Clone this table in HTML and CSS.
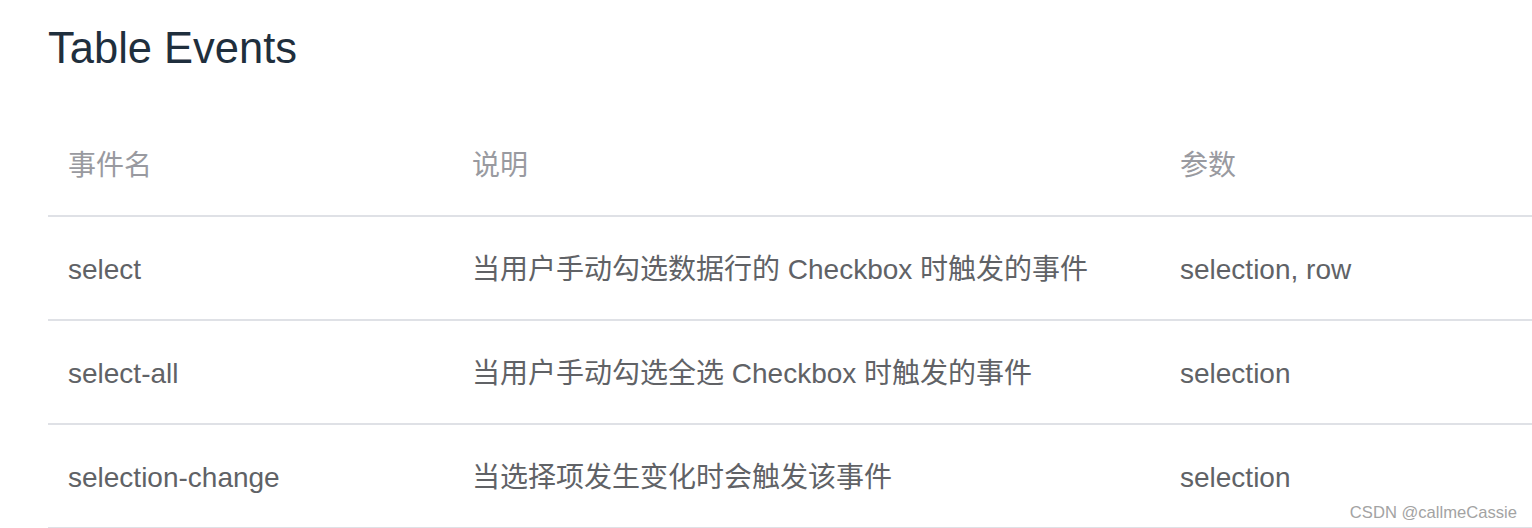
FILE: index.html
```html
<!doctype html>
<html>
	<head>
		<meta charset="utf-8">
		<title>Table Events</title>
		<link rel="stylesheet" href="styles.css">
	</head>
	<body>
		<div class="container">
			<h3 class="title">Table Events</h3>
			<table class="events">
				<tr>
					<th class="col-name">事件名</th>
					<th class="col-desc">说明</th>
					<th>参数</th>
				</tr>
				<tr>
					<td>select</td>
					<td>当用户手动勾选数据行的 Checkbox 时触发的事件</td>
					<td>selection, row</td>
				</tr>
				<tr>
					<td>select-all</td>
					<td>当用户手动勾选全选 Checkbox 时触发的事件</td>
					<td>selection</td>
				</tr>
				<tr>
					<td>selection-change</td>
					<td>当选择项发生变化时会触发该事件</td>
					<td>selection</td>
				</tr>
			</table>
		</div>
		<div class="watermark">CSDN @callmeCassie</div>
	</body>
</html>
```

FILE: styles.css
```css
html, body {
	margin: 0;
	padding: 0;
	background: #fff;
	overflow: hidden;
}

body {
	font-family: "Liberation Sans", "Noto Sans CJK SC", sans-serif;
	position: relative;
	height: 528px;
}

.container {
	padding: 27px 0 0 48px;
}

.title {
	margin: 0;
	font-size: 43.5px;
	line-height: 1;
	font-weight: 400;
	color: #1f2f3d;
}

.events {
	margin-top: 42px;
	width: 1484px;
	border-collapse: collapse;
	font-size: 28px;
}

.events td, .events th {
	height: 98px;
	padding: 4px 20px 0;
	text-align: left;
	vertical-align: middle;
	line-height: 1.4;
	border-bottom: 2px solid #dfe1e6;
	white-space: nowrap;
	box-sizing: content-box;
}

.events th {
	font-weight: 400;
	color: #999aa0;
}

.events td {
	color: #606266;
}

.col-name {
	width: 364px;
}

.col-desc {
	width: 668px;
}

.watermark {
	position: absolute;
	right: 15px;
	bottom: 5px;
	font-size: 16.6px;
	color: #a3a3a3;
}
```
